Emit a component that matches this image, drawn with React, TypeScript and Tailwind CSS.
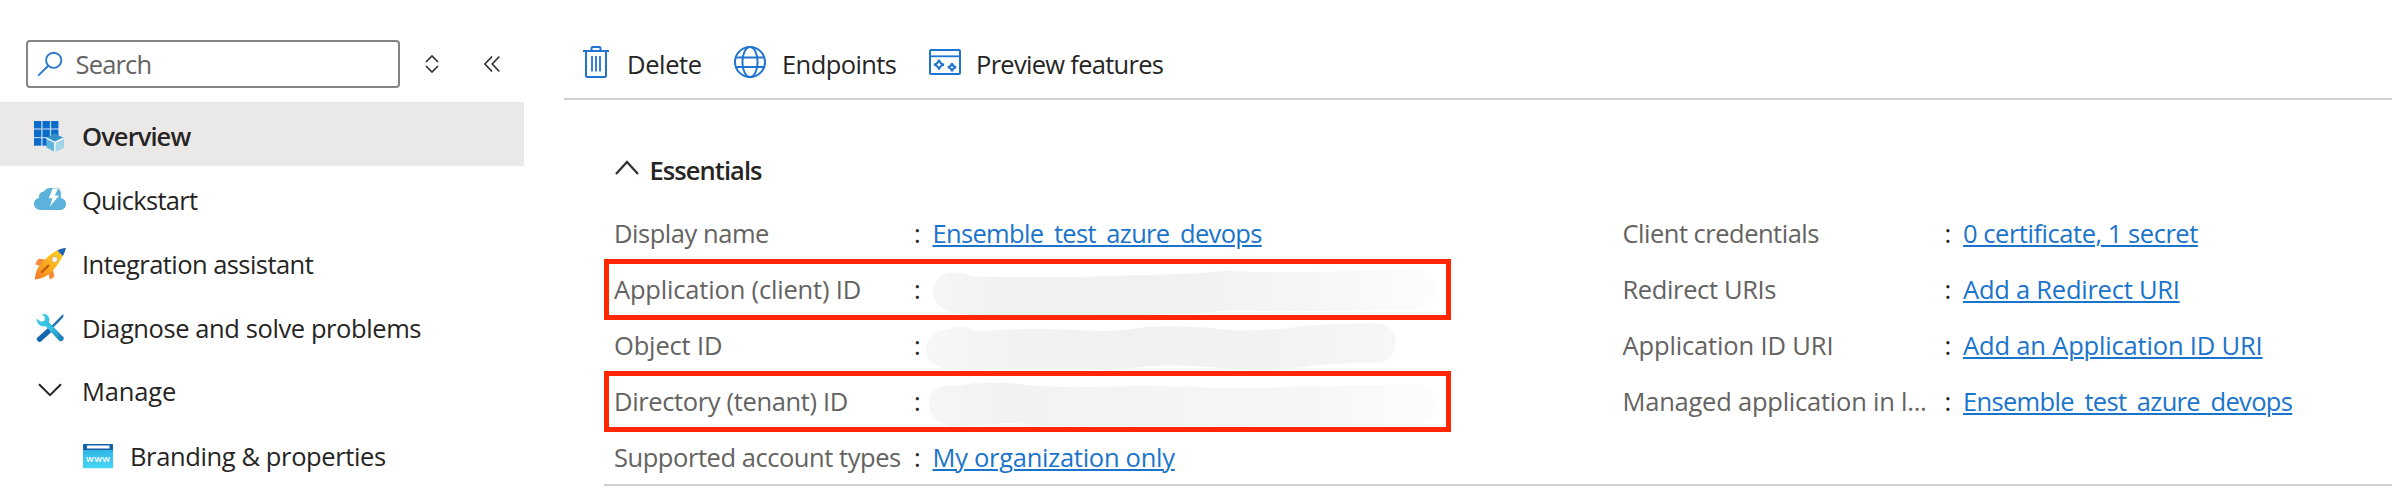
import type { ReactNode } from "react";

function SearchIcon() {
  return (
    <svg width="26" height="26" viewBox="0 0 26 26" fill="none" stroke="#2a76cf" strokeWidth="1.9">
      <circle cx="16.7" cy="9.3" r="7.6" />
      <path d="M11.3 14.7 1.2 24.6" />
    </svg>
  );
}

function OverviewIcon() {
  const cells = [0, 8.6, 17.2];
  return (
    <svg className="mt-[3px]" width="32" height="34" viewBox="0 0 32 34">
      <rect x="0" y="2" width="24.4" height="24.8" fill="#b4d0ef" />
      {cells.map((y) =>
        cells.map((x) => <rect key={`${x}-${y}`} x={x} y={y + 2} width="7.2" height="7.4" fill="#0b6bc9" />),
      )}
      <path d="M20.8 14.8 29.8 19v9.6L20.8 33l-8.4-4.4V19z" fill="#5fb4dc" />
      <path d="M20.8 14.8 29.6 19l-8.8 4-8.2-4z" fill="#3592c6" />
      <path d="M20.8 23.2 29.8 19v9.6L20.8 33z" fill="#a5d7ec" />
      <path d="M12.4 19.2 20.8 23.3 29.6 19.2M20.8 23.3V33" stroke="#fff" strokeWidth="1.3" fill="none" />
    </svg>
  );
}

function QuickstartIcon() {
  return (
    <svg width="32" height="32" viewBox="0 0 32 32">
      <path
        d="M6.8 28C3 28 0 25.2 0 21.8c0-3.2 2.2-5.4 5-5.9-.6-3.5 1.6-6.4 5-6.5C11.4 7.2 13.4 6 16 6h8.3l2.2 5.2c.7 1.6.6 3.2.2 4.7 3.1.4 5.3 2.900 5.300 6C32 25.400 29.300 28 25.800 28z"
        fill="#5cb2da"
      />
      <path d="M18.600 6.400h5.600L20.800 13.400h4.400L15.600 24.800l2.900-8.600h-3.600z" fill="#fff" />
      <path d="m22.300 12.400 3.400-5.400 1.500 4.600z" fill="#5cb2da" />
    </svg>
  );
}

function RocketIcon() {
  return (
    <svg className="mt-0.5" width="32" height="34" viewBox="0 0 32 34">
      <defs>
        <linearGradient id="rocket" x1="1" y1="33" x2="30" y2="3" gradientUnits="userSpaceOnUse">
          <stop offset="0" stopColor="#f4772a" />
          <stop offset=".3" stopColor="#f99d1f" />
          <stop offset=".7" stopColor="#fdc41c" />
          <stop offset="1" stopColor="#f9c51a" />
        </linearGradient>
      </defs>
      <path d="M11 13.400 5 12.800C3.200 14 2 16 1.400 18.400l7 2.200zM18.500 22.800l2 7.200c-1 1.500-2.500 2.600-4.600 3.600l-1.500-6.600z" fill="#f58a3c" />
      <path d="M31.600 2C25 3.200 18.800 6 14.200 10.400 9.500 15 5.800 18.500 3.600 22.600 1.800 26 1.300 30 .8 33.600c4-.6 8.400-1.500 11.600-3.600 4.300-2.800 8.600-7.400 12-12.400C27.800 12.600 30.400 7.600 31.600 2z" fill="url(#rocket)" />
      <path d="M31.800 1.800c-3.200.5-5.800 1.400-8.400 2.700l5.500 5.400c1.500-2.700 2.400-5.200 2.900-8.100z" fill="#1b64bd" />
      <circle cx="20.600" cy="13.400" r="3.100" fill="#f1f3f6" stroke="#dba73a" strokeWidth="1" />
      <path d="M14.400 19.600 7.800 26" stroke="#bf5a10" strokeWidth="2.200" strokeLinecap="round" />
    </svg>
  );
}

function ToolsIcon() {
  return (
    <svg width="32" height="32" viewBox="0 0 32 32">
      <defs>
        <linearGradient id="wrench" x1="3" y1="4" x2="29" y2="31" gradientUnits="userSpaceOnUse">
          <stop offset="0" stopColor="#3ecbec" />
          <stop offset=".55" stopColor="#35bde2" />
          <stop offset="1" stopColor="#1679b3" />
        </linearGradient>
      </defs>
      <path d="m29.600 4.200-.3 2.800-4.300 4.800-8 8-1.600-1.700 7.800-8 4.400-4.700z" fill="#2173a8" />
      <path d="M15.400 16.800 19 20.400 7.300 31.200c-1.200 1-2.400 1-3.500-.1-1.300-1.100-1.400-2.300-.3-3.500z" fill="#1566ad" />
      <path
        d="M8 4.200c3.400-.5 6 .7 7 3.600.6 1.600.5 3-.1 4.400l14.200 14.500c1 1.100 1 2.400-.2 3.600-1.200 1.300-2.600 1.500-3.900.2L11.400 15.900c-1.600.6-3.300.5-5-.4C3.800 14 2.500 11.600 2.600 8.400l4.300 3.300 3.600-1 .5-3.500z"
        fill="url(#wrench)"
      />
    </svg>
  );
}

function BrandingIcon() {
  return (
    <svg className="mt-[3px]" width="30" height="26" viewBox="0 0 30 26">
      <defs>
        <linearGradient id="www" x1="0" y1="25" x2="0" y2="6" gradientUnits="userSpaceOnUse">
          <stop offset="0" stopColor="#46d6f5" />
          <stop offset="1" stopColor="#2cb3e3" />
        </linearGradient>
      </defs>
      <path d="M0 7h30v17.500a.8.800 0 0 1-.8.800H.8a.8.800 0 0 1-.8-.8z" fill="url(#www)" />
      <path d="M.8 1h28.400a.8.800 0 0 1 .8.800V7H0V1.800A.8.800 0 0 1 .8 1z" fill="#1560ad" />
      <rect x="4" y="2.600" width="22.500" height="3" rx=".5" fill="#fff" />
      <text x="15" y="18.600" textAnchor="middle" textLength="24" fontFamily="Open Sans, sans-serif" fontSize="9.500" fontWeight="600" fill="#fff">www</text>
    </svg>
  );
}

function TrashIcon() {
  return (
    <svg width="26" height="32" viewBox="0 0 26 32" fill="none" stroke="#1f74d0" strokeWidth="2">
      <path d="M0 5h26M8.500 5V2.200Q8.500 1 9.700 1h6.600q1.200 0 1.200 1.200V5M3 5v24.500Q3 31 4.500 31h17q1.500 0 1.500-1.500V5" />
      <path d="M9 10v15.500M13 10v15.500M17 10v15.500" strokeWidth="1.800" />
    </svg>
  );
}

function GlobeIcon() {
  return (
    <svg width="32" height="32" viewBox="0 0 32 32" fill="none" stroke="#1f74d0" strokeWidth="2">
      <circle cx="16" cy="16" r="15" />
      <ellipse cx="16" cy="16" rx="7.600" ry="15" />
      <path d="M2.200 11.500h27.600M2.200 21h27.600" />
    </svg>
  );
}

function PreviewIcon() {
  return (
    <svg width="32" height="26" viewBox="0 0 32 26" fill="none" stroke="#1f74d0" strokeWidth="2">
      <rect x="1" y="1" width="30" height="24" rx="1" />
      <path d="M1 7.300h30" strokeWidth="1.800" />
      <path d="M10 10.800q.9 4 4.900 4.900-4 .9-4.900 4.900-.9-4-4.900-4.900 4-.9 4.900-4.900zM23 14.200q.7 3.400 4.100 4.100-3.400.7-4.100 4.100-.7-3.400-4.100-4.100 3.400-.7 4.100-4.100z" />
    </svg>
  );
}

function NavItem({ icon, children, active }: { icon: ReactNode; children: ReactNode; active?: boolean }) {
  return (
    <div className={`flex h-16 items-center pl-[34px] ${active ? "bg-[#ebe9e8] font-semibold" : ""}`}>
      <span className="flex w-12 shrink-0">{icon}</span>
      {children}
    </div>
  );
}

function Redacted({ d, id, stops }: { d: string; id: string; stops: [string, string][] }) {
  return (
    <svg className="-ml-[12px] shrink-0" width="520" height="56" viewBox="0 0 520 56" overflow="visible">
      <defs>
        <linearGradient id={id}>
          {stops.map(([offset, color]) => (
            <stop key={offset} offset={offset} stopColor={color} />
          ))}
        </linearGradient>
      </defs>
      <path d={d} fill={`url(#${id})`} />
    </svg>
  );
}

function Field({ label, value, boxed, side = "left" }: { label: ReactNode; value: ReactNode; boxed?: boolean; side?: "left" | "right" }) {
  return (
    <div className="relative flex h-14 items-center">
      <span className={`shrink-0 pt-px text-[#646361] ${side === "left" ? "w-[300px]" : "w-[322px]"}`}>{label}</span>
      <span className="w-[18.5px] shrink-0 pt-px font-medium text-[#222]">:</span>
      {value}
      {boxed && <span className="absolute -left-[10px] -top-px h-[61px] w-[847px] border-[5px] border-[#ff2600]" />}
    </div>
  );
}

function Link({ className, children }: { className: string; children: ReactNode }) {
  return (
    <a className={`pt-px text-[#1b74cb] underline decoration-2 underline-offset-2 ${className}`}>{children}</a>
  );
}

export default function App() {
  return (
    <div className="flex h-[500px] w-[2392px] overflow-hidden whitespace-nowrap bg-white font-['Open_Sans',sans-serif] text-[25.5px] leading-[36px] text-[#262524]">
      <aside className="w-[524px] shrink-0">
        <div className="flex h-[102px] items-center pl-[26px] pt-[26px]">
          <div className="flex h-12 w-[374px] items-center rounded-[4px] border-2 border-[#868482] pl-[9px]">
            <SearchIcon />
            <span className="ml-[12.5px] pb-px tracking-[-0.82px] text-[#646361]">Search</span>
          </div>
          <svg className="ml-[25px]" width="14" height="18" viewBox="0 0 14 18" fill="none" stroke="#333" strokeWidth="1.700">
            <path d="m1 7 6-6 6 6M1 11l6 6 6-6" />
          </svg>
          <svg className="ml-[45px]" width="16" height="18" viewBox="0 0 16 18" fill="none" stroke="#333" strokeWidth="1.700">
            <path d="M8 1.500.9 9 8 16.500M15.300 1.500 8.200 9l7.100 7.500" />
          </svg>
        </div>
        <NavItem active icon={<OverviewIcon />}>
          <span className="pt-[3px] tracking-[-0.92px]">Overview</span>
        </NavItem>
        <NavItem icon={<QuickstartIcon />}>
          <span className="pt-[3px] tracking-[-0.71px]">Quickstart</span>
        </NavItem>
        <NavItem icon={<RocketIcon />}>
          <span className="pt-[3px] tracking-[-0.55px]">Integration assistant</span>
        </NavItem>
        <NavItem icon={<ToolsIcon />}>
          <span className="pt-[3px] tracking-[-0.41px]">Diagnose and solve problems</span>
        </NavItem>
        <NavItem
          icon={
            <svg className="ml-1" width="24" height="14" viewBox="0 0 24 14" fill="none" stroke="#262524" strokeWidth="2">
              <path d="m1 1.200 11 11 11-11" />
            </svg>
          }
        >
          <span className="pt-px tracking-[-0.17px]">Manage</span>
        </NavItem>
        <div className="flex h-16 items-center pl-[83px]">
          <BrandingIcon />
          <span className="ml-[17px] pt-[3px] tracking-[-0.38px]">Branding &amp; properties</span>
        </div>
      </aside>

      <main className="ml-10 flex-1">
        <div className="flex h-[100px] items-center border-b-2 border-[#d2d1d0] pl-[19px] pt-[26px]">
          <TrashIcon />
          <span className="ml-[18px] w-[107px] pt-[3px] tracking-[-0.37px]">Delete</span>
          <GlobeIcon />
          <span className="ml-[16px] w-[147px] pt-[3px] tracking-[-0.59px]">Endpoints</span>
          <PreviewIcon />
          <span className="ml-[15px] pt-[3px] tracking-[-0.71px]">Preview features</span>
        </div>

        <section className="ml-10">
          <div className="flex h-[104px] items-center pl-[11px] pt-[32px]">
            <svg width="24" height="16" viewBox="0 0 24 16" fill="none" stroke="#333" strokeWidth="2.300">
              <path d="M1 14 12 2l11 12" />
            </svg>
            <span className="ml-[10.5px] pt-[3px] font-semibold tracking-[-0.94px]">Essentials</span>
          </div>
          <div className="flex h-[282px] border-b-2 border-[#d2d1d0] pl-[10px]">
            <div className="w-[1008.5px]">
              <Field label={<span className="tracking-[-0.46px]">Display name</span>} value={<Link className="tracking-[-0.67px]">Ensemble_test_azure_devops</Link>} />
              <Field
                boxed
                label={<span className="tracking-[-0.18px]">Application (client) ID</span>}
                value={
                  <Redacted
                    id="client"
                    d="M12 32C12 20 20 12.500 33 12.500C44 12.500 47 17 62 17H160C200 15 260 15 290 12C315 9 320 12 340 12C400 13 440 10 494 9.500A20 20 0 0 1 494 50C440 50 380 52 340 51C310 48 290 53 260 54C200 56 80 56 50 55C26 54 12 46 12 32Z"
                    stops={[["0", "#f6f6f8"], [".15", "#f0f1f3"], [".55", "#f1f2f4"], [".8", "#f7f7f8"], ["1", "#fdfdfd"]]}
                  />
                }
              />
              <Field
                label={<span className="tracking-[-0.16px]">Object ID</span>}
                value={
                  <Redacted
                    id="object"
                    d="M5 34C6 20 16 13.500 28 13.500C36 9 48 10 54 15C80 15 100 12 130 13C170 15 190 15 205 14C230 9 260 10 290 12C310 15 330 15 360 13C390 9 400 8 455 7A20 20 0 0 1 455 47C420 47 400 48 376 52C350 54 310 54 290 51C250 49 240 49 220 51C200 54 180 53 160 53H30C15 53 5 45 5 34Z"
                    stops={[["0", "#f7f7f7"], [".2", "#f1f2f4"], [".45", "#f1f1f3"], [".8", "#f3f3f3"], ["1", "#f7f7f7"]]}
                  />
                }
              />
              <Field
                boxed
                label={<span className="tracking-[-0.36px]">Directory (tenant) ID</span>}
                value={
                  <Redacted
                    id="tenant"
                    d="M8 32C8 20 16 13.500 28 13.500C38 15 44 11 60 11C100 10 104 14 120 14C160 16 190 14 220 14C260 14 300 17 340 16C380 14 440 14 494 12A20 20 0 0 1 494 53C440 54 160 55 120 54C90 48 60 54 36 54C20 54 8 46 8 32Z"
                    stops={[["0", "#f6f6f7"], [".15", "#f1f2f3"], [".4", "#f3f4f6"], [".75", "#f6f6f6"], ["1", "#fdfdfd"]]}
                  />
                }
              />
              <Field label={<span className="tracking-[-0.45px]">Supported account types</span>} value={<Link className="tracking-[-0.27px]">My organization only</Link>} />
            </div>
            <div>
              <Field side="right" label={<span className="tracking-[-0.5px]">Client credentials</span>} value={<Link className="tracking-[-0.46px]">0 certificate, 1 secret</Link>} />
              <Field side="right" label={<span className="tracking-[-0.37px]">Redirect URIs</span>} value={<Link className="tracking-[-0.24px]">Add a Redirect URI</Link>} />
              <Field side="right" label={<span className="tracking-[-0.14px]">Application ID URI</span>} value={<Link className="tracking-[-0.17px]">Add an Application ID URI</Link>} />
              <Field side="right" label={<span className="tracking-[-0.23px]">Managed application in l...</span>} value={<Link className="tracking-[-0.67px]">Ensemble_test_azure_devops</Link>} />
            </div>
          </div>
        </section>
      </main>
    </div>
  );
}
